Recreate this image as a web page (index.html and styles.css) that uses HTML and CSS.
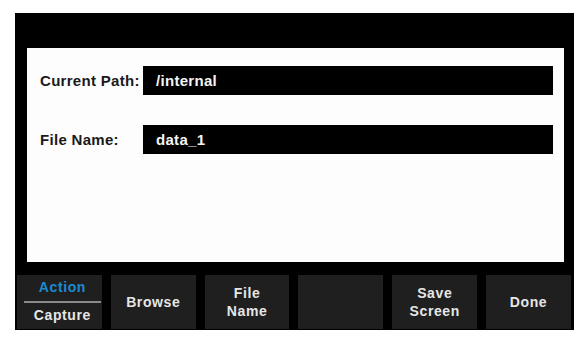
FILE: index.html
```html
<!DOCTYPE html>
<html lang="en">
<head>
    <meta charset="UTF-8">
    <title>Save Screen</title>
    <link rel="stylesheet" href="styles.css">
</head>
<body>
    <div class="screen">
        <div class="title-bar"></div>

        <div class="panel">
            <div class="field-row">
                <span class="field-label">Current Path:</span>
                <div class="field-box">/internal</div>
            </div>
            <div class="field-row">
                <span class="field-label">File Name:</span>
                <div class="field-box">data_1</div>
            </div>
        </div>

        <div class="softkeys">
            <div class="softkey split">
                <span class="key-top">Action</span>
                <span class="key-bottom">Capture</span>
            </div>
            <div class="softkey">Browse</div>
            <div class="softkey">File<br>Name</div>
            <div class="softkey"></div>
            <div class="softkey">Save<br>Screen</div>
            <div class="softkey">Done</div>
        </div>
    </div>
</body>
</html>
```

FILE: styles.css
```css
body {
    margin: 0;
    background-color: #fff;
    font-family: "Liberation Sans", Arial, sans-serif;
}
.screen {
    margin: 13px 0 0 15px;
    width: 559px;
    height: 317px;
    background-color: #000;
    display: flex;
    flex-direction: column;
}
.title-bar {
    height: 35px;
}
.panel {
    height: 214px;
    margin: 0 10px 0 12px;
    background-color: #fdfdfd;
    padding: 18px 11px 0 13px;
    box-sizing: border-box;
    display: flex;
    flex-direction: column;
    gap: 30px;
}
.field-row {
    display: flex;
    align-items: center;
}
.field-label {
    width: 103px;
    flex-shrink: 0;
    font-size: 15px;
    font-weight: bold;
    letter-spacing: 0.3px;
    color: #1a1a1a;
}
.field-box {
    flex: 1;
    height: 29px;
    line-height: 29px;
    background-color: #000;
    color: #f4f4f4;
    font-size: 15px;
    font-weight: bold;
    letter-spacing: 0.3px;
    padding-left: 13px;
}
.softkeys {
    margin-top: 13px;
    height: 54px;
    padding: 0 3px 0 2px;
    display: flex;
    gap: 9px;
}
.softkey {
    flex: 1 1 0;
    min-width: 0;
    box-sizing: border-box;
    background-color: #1f1f1f;
    color: #e6e6e6;
    font-size: 14px;
    font-weight: bold;
    letter-spacing: 0.6px;
    line-height: 18px;
    display: flex;
    align-items: center;
    justify-content: center;
    text-align: center;
}
.softkey.split {
    flex-direction: column;
    justify-content: flex-start;
    align-items: stretch;
}
.key-top {
    color: #1d8ad0;
    height: 26px;
    line-height: 25px;
    margin: 0 1px 0 7px;
    border-bottom: 2px solid #8a8a8a;
}
.key-bottom {
    line-height: 25px;
    padding-left: 6px;
}
```
